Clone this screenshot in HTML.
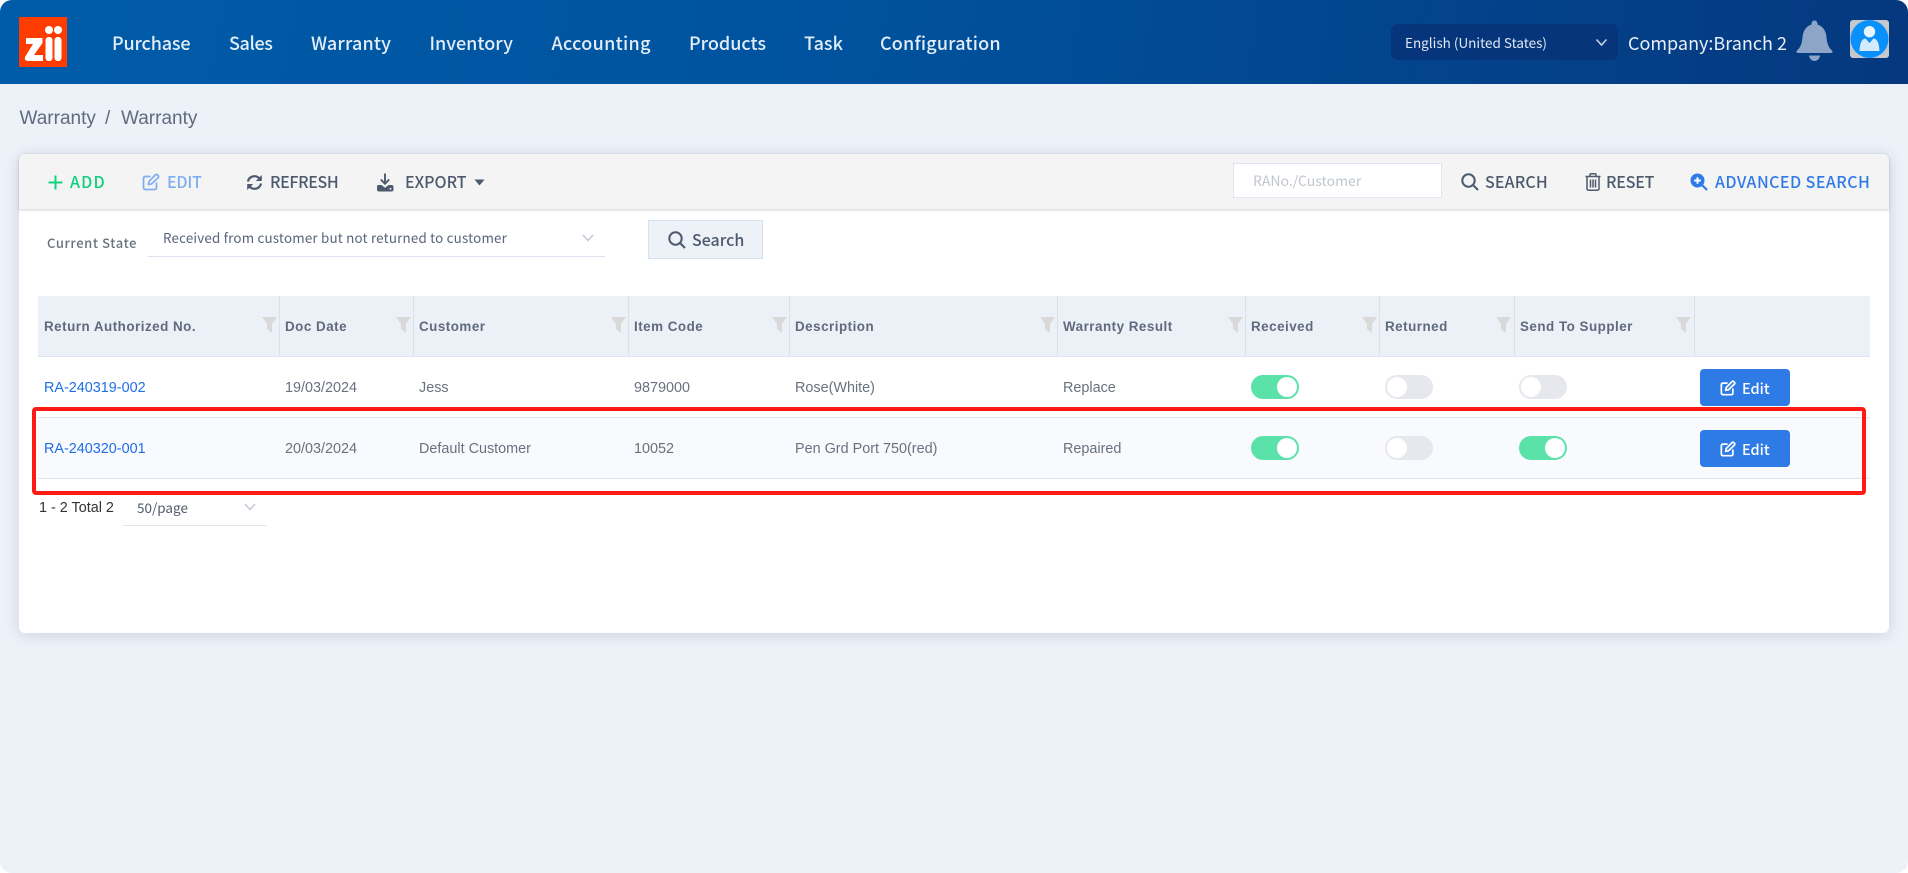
<!DOCTYPE html>
<html lang="en">
<head>
<meta charset="utf-8">
<title>Warranty</title>
<style>
html,body{margin:0;padding:0;width:1908px;height:873px;overflow:hidden;background:#fff}
*{box-sizing:border-box}
#app{position:absolute;left:0;top:0;width:1908px;height:873px;background:#edf1f8;border-radius:12px;overflow:hidden}
.a{position:absolute;white-space:nowrap}
.n{font-family:"Noto Sans CJK SC","Liberation Sans",sans-serif}
.l{font-family:"Liberation Sans",sans-serif}
#hd{position:absolute;left:0;top:0;width:1908px;height:84px;background:linear-gradient(100deg,#005ca9 0%,#00529d 45%,#05387e 100%)}
.nav{top:29px;line-height:28px;font-size:18px;font-weight:500;color:#e2edf7}
.tb{top:169px;line-height:24px;font-size:16px;font-weight:500;color:#4d5a6d}
.th{top:318px;line-height:18px;font-size:13.4px;font-weight:700;color:#5f6a7d;letter-spacing:.5px}
.td{line-height:20px;font-size:14.4px;color:#69727f}
.lnk{color:#1f6fe5}
.div{position:absolute;top:296px;height:60px;width:1px;background:#dde0e6}
.fun{position:absolute;top:317px;width:15px;height:16px}
.tg{position:absolute;width:48px;height:24px;border-radius:12px}
.tg.on{background:#5ae2a8}
.tg.off{background:#e6e8ee}
.tg i{position:absolute;top:2px;width:20px;height:20px;border-radius:50%;background:#fff}
.tg.on i{right:2px}
.tg.off i{left:2px}
.btn{position:absolute;left:1700px;width:90px;height:37px;background:#2f7be5;border-radius:4px}
.btn span{position:absolute;left:42px;top:9px;line-height:22px;font-size:14.5px;font-weight:500;color:#fff}
.btn svg{position:absolute;left:20px;top:11px}
</style>
</head>
<body>
<div id="app">
  <div id="hd"></div>

  <!-- logo -->
  <div class="a" style="left:19px;top:17px;width:48px;height:50px;background:#ff3c00"></div>
  <svg class="a" style="left:19px;top:17px" width="48" height="50" viewBox="0 0 48 50">
    <circle cx="30" cy="13" r="4" fill="#fff"/><circle cx="39" cy="13" r="4" fill="#fff"/>
    <rect x="26.5" y="20" width="7" height="24" rx="3.2" fill="#fff"/>
    <rect x="35.5" y="20" width="7" height="24" rx="3.2" fill="#fff"/>
    <path d="M7 21H23.5V26L15 38H24V44H9.5Q5 44 6 40L14 27H7Z" fill="#fff"/>
  </svg>

  <div class="a n nav" style="left:112px;letter-spacing:-.15px">Purchase</div>
  <div class="a n nav" style="left:229px;letter-spacing:-.4px">Sales</div>
  <div class="a n nav" style="left:311px;letter-spacing:.15px">Warranty</div>
  <div class="a n nav" style="left:429.500px">Inventory</div>
  <div class="a n nav" style="left:551.500px;letter-spacing:.3px">Accounting</div>
  <div class="a n nav" style="left:689px">Products</div>
  <div class="a n nav" style="left:804px">Task</div>
  <div class="a n nav" style="left:880px;letter-spacing:.18px">Configuration</div>

  <!-- language -->
  <div class="a" style="left:1391px;top:24px;width:227px;height:36px;background:#07357b;border-radius:7px"></div>
  <div class="a n" style="left:1405px;top:31px;line-height:22px;font-size:13.5px;color:#dfe8f3">English (United States)</div>
  <svg class="a" style="left:1595px;top:38px" width="13" height="9" viewBox="0 0 13 9"><path d="M1.5 1.5L6.5 7L11.5 1.5" fill="none" stroke="#c5d2e4" stroke-width="1.6"/></svg>
  <div class="a n" style="left:1628px;top:30px;line-height:26px;font-size:18px;font-weight:400;color:#e8eff7">Company:Branch 2</div>

  <!-- bell -->
  <svg class="a" style="left:1796px;top:20px" width="37" height="42" viewBox="0 0 37 42">
    <path d="M18.500 0.500C20.500 0.500 21.500 2 21.500 4.500C27.500 6.500 30 11.500 30.500 17C31 24 33 28 36 30.500C37 31.500 36.500 33 35 33H2C0.500 33 0 31.500 1 30.500C4 28 6 24 6.500 17C7 11.500 9.500 6.500 15.500 4.500C15.500 2 16.500 0.500 18.500 0.500Z" fill="#8da6c8"/>
    <path d="M13 35.500H24C23.500 39 21 41 18.500 41C16 41 13.500 39 13 35.500Z" fill="#8da6c8"/>
  </svg>

  <!-- avatar -->
  <svg class="a" style="left:1850px;top:20px" width="39" height="38" viewBox="0 0 39 38">
    <rect width="39" height="38" rx="3" fill="#c5c9ce"/>
    <circle cx="19.500" cy="19" r="19" fill="#0a90fa"/>
    <circle cx="19.500" cy="11.700" r="5.700" fill="#e6f4fe"/>
    <path d="M15.500 18.500L19.500 23L23.500 18.500C27 19 29 22 29.500 31H9.500C10 22 12 19 15.500 18.500Z" fill="#d2ecfd"/>
  </svg>

  <!-- breadcrumb -->
  <div class="a l" style="left:19.500px;top:108px;line-height:22px;font-size:19px;color:#5f6b7f">Warranty</div>
  <div class="a l" style="left:105px;top:108px;line-height:22px;font-size:19px;color:#5f6b7f">/</div>
  <div class="a l" style="left:121px;top:108px;line-height:22px;font-size:19px;color:#5f6b7f">Warranty</div>

  <!-- card -->
  <div class="a" style="left:19px;top:154px;width:1870px;height:479px;background:#fff;border-radius:6px;box-shadow:0 2px 14px rgba(90,105,130,.22)"></div>
  <div class="a" style="left:19px;top:154px;width:1870px;height:55px;background:#f4f4f5;border-radius:6px 6px 0 0;box-shadow:0 1px 3px rgba(0,0,0,.18)"></div>

  <!-- toolbar left -->
  <svg class="a" style="left:48px;top:175px" width="15" height="15" viewBox="0 0 15 15"><path d="M7.500 0.500V14.500M0.500 7.500H14.500" stroke="#12d27f" stroke-width="2" fill="none"/></svg>
  <div class="a n tb" style="left:70px;color:#10cf7c;letter-spacing:1.200px">ADD</div>
  <svg class="a" style="left:142px;top:173px" width="18" height="18" viewBox="0 0 18 18" fill="none" stroke="#7eaef0" stroke-width="1.700">
    <path d="M14.500 9.500V14.500Q14.500 16.500 12.500 16.500H3.500Q1.500 16.500 1.500 14.500V5.500Q1.500 3.500 3.500 3.500H8.500"/>
    <path d="M6.500 11.500L7 8.500L13.500 1.800Q14.500 1 15.500 1.800L16.300 2.600Q17 3.500 16.300 4.500L9.500 11Z"/>
  </svg>
  <div class="a n tb" style="left:167px;color:#7eaef0;letter-spacing:-.2px">EDIT</div>
  <svg class="a" style="left:246px;top:174px" width="17" height="17" viewBox="0 0 17 17" fill="none" stroke="#4d5a6d" stroke-width="2.200">
    <path d="M2 7.500C2.500 4.500 5 2.200 8.500 2.200C11 2.200 12.500 3.400 13.800 4.800"/>
    <path d="M15.800 1V7H9.800Z" fill="#4d5a6d" stroke="none"/>
    <path d="M15 9.500C14.500 12.500 12 14.800 8.500 14.800C6 14.800 4.500 13.600 3.200 12.200"/>
    <path d="M1.200 16V10H7.200Z" fill="#4d5a6d" stroke="none"/>
  </svg>
  <div class="a n tb" style="left:270px;letter-spacing:-.35px">REFRESH</div>
  <svg class="a" style="left:376px;top:173px" width="18" height="19" viewBox="0 0 18 19">
    <path d="M9 0.500V10M4.800 6.500L9 10.800L13.200 6.500" fill="none" stroke="#4d5a6d" stroke-width="1.900"/>
    <path d="M1 13.500Q1 12 2.500 12H5.500L9 14.800L12.500 12H15.500Q17.500 12 17.500 14V16.500Q17.500 18.500 15.500 18.500H3Q1 18.500 1 16.500Z" fill="#4d5a6d"/>
    <circle cx="14.500" cy="15.800" r=".9" fill="#f4f4f5"/>
  </svg>
  <div class="a n tb" style="left:405px">EXPORT</div>
  <svg class="a" style="left:474px;top:179px" width="11" height="7" viewBox="0 0 11 7"><path d="M0.500 0.500H10.500L5.500 6.500Z" fill="#4d5a6d"/></svg>

  <!-- toolbar right -->
  <div class="a" style="left:1233px;top:163px;width:209px;height:35px;background:#fff;border:1px solid #dfe6f2"></div>
  <div class="a n" style="left:1253px;top:170px;line-height:22px;font-size:14px;color:#c0c5cf">RANo./Customer</div>
  <svg class="a" style="left:1461px;top:173px" width="18" height="18" viewBox="0 0 18 18" fill="none" stroke="#4d5a6d" stroke-width="2"><circle cx="7.500" cy="7.500" r="6.200"/><path d="M12 12L17 17"/></svg>
  <div class="a n tb" style="left:1485px;letter-spacing:.15px">SEARCH</div>
  <svg class="a" style="left:1585px;top:173px" width="16" height="18" viewBox="0 0 16 18" fill="none" stroke="#4d5a6d" stroke-width="1.500">
    <path d="M0.500 3.500H15.500M5 3.500V2Q5 0.800 6.200 0.800H9.800Q11 0.800 11 2V3.500"/>
    <path d="M2 3.500V15.500Q2 17.200 3.700 17.200H12.300Q14 17.200 14 15.500V3.500"/>
    <path d="M5.500 6.500V14.500M8 6.500V14.500M10.500 6.500V14.500"/>
  </svg>
  <div class="a n tb" style="left:1606px;letter-spacing:-.2px">RESET</div>
  <svg class="a" style="left:1690px;top:173px" width="18" height="18" viewBox="0 0 18 18">
    <circle cx="7.500" cy="7.500" r="7" fill="#2f7be5"/>
    <path d="M12 12L17 17" stroke="#2f7be5" stroke-width="2.200"/>
    <path d="M7.500 4.200V10.800M4.200 7.500H10.800" stroke="#fff" stroke-width="1.900"/>
  </svg>
  <div class="a n tb" style="left:1715px;color:#2f7be5;letter-spacing:.45px">ADVANCED SEARCH</div>

  <!-- filter -->
  <div class="a n" style="left:47px;top:233px;line-height:20px;font-size:13px;font-weight:500;color:#66727f;letter-spacing:.6px">Current State</div>
  <div class="a n" style="left:163px;top:226px;line-height:22px;font-size:13.400px;color:#59647a;letter-spacing:.18px">Received from customer but not returned to customer</div>
  <div class="a" style="left:148px;top:256px;width:457px;height:1px;background:#dbe3ef"></div>
  <svg class="a" style="left:582px;top:234px" width="12" height="8" viewBox="0 0 12 8"><path d="M1 1L6 6.500L11 1" fill="none" stroke="#c3c9d3" stroke-width="1.500"/></svg>
  <div class="a" style="left:648px;top:220px;width:115px;height:39px;background:#edf1f8;border:1px solid #d8e2ef"></div>
  <svg class="a" style="left:668px;top:231px" width="18" height="18" viewBox="0 0 18 18" fill="none" stroke="#4d5a6d" stroke-width="2"><circle cx="7.500" cy="7.500" r="6.200"/><path d="M12 12L17 17"/></svg>
  <div class="a n" style="left:692px;top:227px;line-height:24px;font-size:16px;font-weight:500;color:#4d5a6d">Search</div>

  <!-- table header -->
  <div class="a" style="left:38px;top:296px;width:1832px;height:60px;background:#ecf0f7"></div>
  <div class="a" style="left:38px;top:356px;width:1832px;height:1px;background:#dde3f0"></div>
  <div class="div" style="left:279px"></div>
  <div class="div" style="left:413px"></div>
  <div class="div" style="left:628px"></div>
  <div class="div" style="left:789px"></div>
  <div class="div" style="left:1057px"></div>
  <div class="div" style="left:1245px"></div>
  <div class="div" style="left:1379px"></div>
  <div class="div" style="left:1514px"></div>
  <div class="div" style="left:1694px"></div>

  <div class="a l th" style="left:44px">Return Authorized No.</div>
  <div class="a l th" style="left:285px">Doc Date</div>
  <div class="a l th" style="left:419px">Customer</div>
  <div class="a l th" style="left:634px">Item Code</div>
  <div class="a l th" style="left:795px">Description</div>
  <div class="a l th" style="left:1063px">Warranty Result</div>
  <div class="a l th" style="left:1251px">Received</div>
  <div class="a l th" style="left:1385px">Returned</div>
  <div class="a l th" style="left:1520px">Send To Suppler</div>

  <svg class="fun" style="left:262px" viewBox="0 0 15 16"><path d="M0 0H15L10 7V16L5 12V7Z" fill="#d9d9d9"/></svg>
  <svg class="fun" style="left:396px" viewBox="0 0 15 16"><path d="M0 0H15L10 7V16L5 12V7Z" fill="#d9d9d9"/></svg>
  <svg class="fun" style="left:611px" viewBox="0 0 15 16"><path d="M0 0H15L10 7V16L5 12V7Z" fill="#d9d9d9"/></svg>
  <svg class="fun" style="left:772px" viewBox="0 0 15 16"><path d="M0 0H15L10 7V16L5 12V7Z" fill="#d9d9d9"/></svg>
  <svg class="fun" style="left:1040px" viewBox="0 0 15 16"><path d="M0 0H15L10 7V16L5 12V7Z" fill="#d9d9d9"/></svg>
  <svg class="fun" style="left:1228px" viewBox="0 0 15 16"><path d="M0 0H15L10 7V16L5 12V7Z" fill="#d9d9d9"/></svg>
  <svg class="fun" style="left:1362px" viewBox="0 0 15 16"><path d="M0 0H15L10 7V16L5 12V7Z" fill="#d9d9d9"/></svg>
  <svg class="fun" style="left:1496px" viewBox="0 0 15 16"><path d="M0 0H15L10 7V16L5 12V7Z" fill="#d9d9d9"/></svg>
  <svg class="fun" style="left:1676px" viewBox="0 0 15 16"><path d="M0 0H15L10 7V16L5 12V7Z" fill="#d9d9d9"/></svg>

  <!-- row backgrounds -->
  <div class="a" style="left:38px;top:417px;width:1832px;height:62px;background:#f8fafd;border-top:1px solid #dde3f0;border-bottom:1px solid #dde3f0"></div>

  <!-- row 1 -->
  <div class="a l td lnk" style="left:44px;top:378px">RA-240319-002</div>
  <div class="a l td" style="left:285px;top:378px">19/03/2024</div>
  <div class="a l td" style="left:419px;top:378px">Jess</div>
  <div class="a l td" style="left:634px;top:378px">9879000</div>
  <div class="a l td" style="left:795px;top:378px">Rose(White)</div>
  <div class="a l td" style="left:1063px;top:378px">Replace</div>
  <div class="tg on" style="left:1251px;top:375px"><i></i></div>
  <div class="tg off" style="left:1385px;top:375px"><i></i></div>
  <div class="tg off" style="left:1519px;top:375px"><i></i></div>
  <div class="btn" style="top:369px">
    <svg width="16" height="16" viewBox="0 0 18 18" fill="none" stroke="#fff" stroke-width="1.900"><path d="M14.500 9.500V14.500Q14.500 16.500 12.500 16.500H3.500Q1.500 16.500 1.500 14.500V5.500Q1.500 3.500 3.500 3.500H8.500"/><path d="M6.500 11.500L7 8.500L13.500 1.800Q14.500 1 15.500 1.800L16.300 2.600Q17 3.500 16.300 4.500L9.500 11Z"/></svg>
    <span class="n">Edit</span>
  </div>

  <!-- row 2 -->
  <div class="a l td lnk" style="left:44px;top:439px">RA-240320-001</div>
  <div class="a l td" style="left:285px;top:439px">20/03/2024</div>
  <div class="a l td" style="left:419px;top:439px">Default Customer</div>
  <div class="a l td" style="left:634px;top:439px">10052</div>
  <div class="a l td" style="left:795px;top:439px">Pen Grd Port 750(red)</div>
  <div class="a l td" style="left:1063px;top:439px">Repaired</div>
  <div class="tg on" style="left:1251px;top:436px"><i></i></div>
  <div class="tg off" style="left:1385px;top:436px"><i></i></div>
  <div class="tg on" style="left:1519px;top:436px"><i></i></div>
  <div class="btn" style="top:430px">
    <svg width="16" height="16" viewBox="0 0 18 18" fill="none" stroke="#fff" stroke-width="1.900"><path d="M14.500 9.500V14.500Q14.500 16.500 12.500 16.500H3.500Q1.500 16.500 1.500 14.500V5.500Q1.500 3.500 3.500 3.500H8.500"/><path d="M6.500 11.500L7 8.500L13.500 1.800Q14.500 1 15.500 1.800L16.300 2.600Q17 3.500 16.300 4.500L9.500 11Z"/></svg>
    <span class="n">Edit</span>
  </div>

  <!-- red annotation -->
  <div class="a" style="left:32px;top:407px;width:1834px;height:88px;border:4px solid #ff1a14;border-radius:4px"></div>

  <!-- pagination -->
  <div class="a l" style="left:39px;top:498px;line-height:20px;font-size:14.400px;color:#333">1 - 2 Total 2</div>
  <div class="a n" style="left:137px;top:496px;line-height:22px;font-size:13.500px;color:#4f5a6a">50/page</div>
  <svg class="a" style="left:244px;top:503px" width="12" height="8" viewBox="0 0 12 8"><path d="M1 1L6 6.500L11 1" fill="none" stroke="#c3c9d3" stroke-width="1.500"/></svg>
  <div class="a" style="left:123px;top:525px;width:144px;height:1px;background:#e0e5ee"></div>
</div>
</body>
</html>
